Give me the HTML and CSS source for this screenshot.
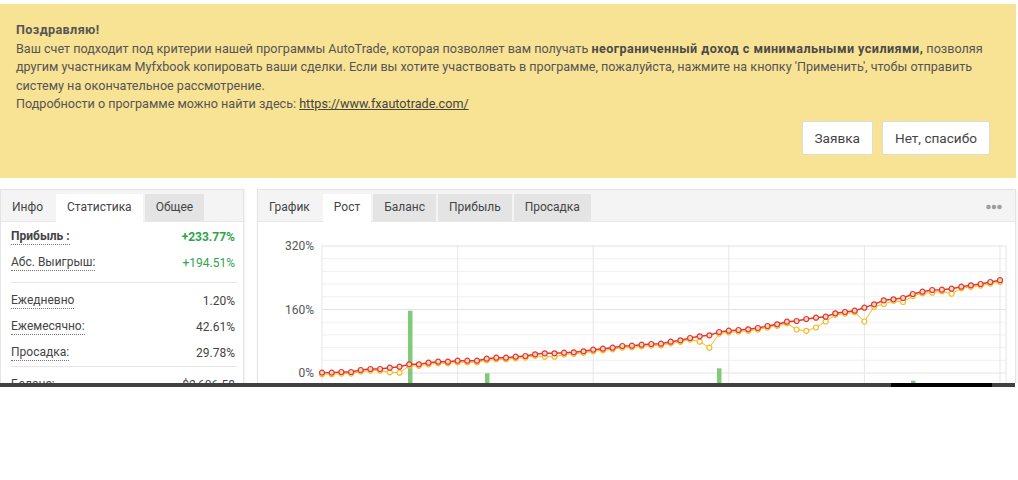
FILE: index.html
```html
<!DOCTYPE html>
<html lang="ru">
<head>
  <meta charset="UTF-8" />
  <meta name="viewport" content="width=device-width, initial-scale=1.0"/>
  <title>Статистика | Myfxbook</title>
  <link rel="stylesheet" href="styles.css">
</head>
<body>

  <div class="page">

    <!-- AutoTrade notice -->
    <div class="notice">
      <p class="notice-title">Поздравляю!</p>
      <p>Ваш счет подходит под критерии нашей программы AutoTrade, которая позволяет вам получать <b>неограниченный доход с минимальными усилиями,</b> позволяя другим участникам Myfxbook копировать ваши сделки. Если вы хотите участвовать в программе, пожалуйста, нажмите на кнопку 'Применить', чтобы отправить систему на окончательное рассмотрение.</p>
      <p>Подробности о программе можно найти здесь: <a href="https://www.fxautotrade.com/">https://www.fxautotrade.com/</a></p>
      <div class="notice-actions">
        <button>Заявка</button>
        <button>Нет, спасибо</button>
      </div>
    </div>

    <div class="panels">

      <!-- Stats -->
      <div class="panel panel-stats">
        <div class="tabs">
          <span class="tab tab-plain">Инфо</span>
          <span class="tab active">Статистика</span>
          <span class="tab">Общее</span>
        </div>
        <div class="stats-group stats-main">
          <div class="stat"><span class="stat-label strong">Прибыль :</span><span class="stat-value up strong">+233.77%</span></div>
          <div class="stat"><span class="stat-label">Абс. Выигрыш:</span><span class="stat-value up">+194.51%</span></div>
        </div>
        <div class="stats-group">
          <div class="stat"><span class="stat-label">Ежедневно</span><span class="stat-value">1.20%</span></div>
          <div class="stat"><span class="stat-label">Ежемесячно:</span><span class="stat-value">42.61%</span></div>
          <div class="stat"><span class="stat-label">Просадка:</span><span class="stat-value">29.78%</span></div>
        </div>
        <div class="stats-group">
          <div class="stat"><span class="stat-label">Баланс:</span><span class="stat-value">$2,606.58</span></div>
          <div class="stat"><span class="stat-label">Средства:</span><span class="stat-value">(100.00%) $2,606.58</span></div>
        </div>
      </div>

      <!-- Chart -->
      <div class="panel panel-chart">
        <div class="tabs">
          <span class="tab tab-plain">График</span>
          <span class="tab active">Рост</span>
          <span class="tab">Баланс</span>
          <span class="tab">Прибыль</span>
          <span class="tab">Просадка</span>
          <svg class="more" width="16" height="6" viewBox="0 0 16 6">
            <circle cx="2.5" cy="3" r="2.3" fill="#9e9e9e"/>
            <circle cx="8" cy="3" r="2.3" fill="#9e9e9e"/>
            <circle cx="13.5" cy="3" r="2.3" fill="#9e9e9e"/>
          </svg>
        </div>
        <svg id="growthChart" class="chart" width="757" height="200" viewBox="0 0 757 200">
          <defs>
            <marker id="dotRed" markerUnits="userSpaceOnUse" markerWidth="8" markerHeight="8" refX="4" refY="4">
              <circle cx="4" cy="4" r="2.5" fill="#fcd9cf" stroke="#e0392a" stroke-width="1.2"/>
            </marker>
            <marker id="dotOrange" markerUnits="userSpaceOnUse" markerWidth="8" markerHeight="8" refX="4" refY="4">
              <circle cx="4" cy="4" r="2.5" fill="#fff" stroke="#f7b91e" stroke-width="1.2"/>
            </marker>
          </defs>
          <g id="grid"></g>
          <g class="axis">
            <text x="56" y="28">320%</text>
            <text x="56" y="92">160%</text>
            <text x="56" y="155">0%</text>
          </g>
          <g id="bars" fill="#7fcb7a"></g>
          <polyline id="equityLine" fill="none" stroke="#f7b91e" stroke-width="1"
            marker-start="url(#dotOrange)" marker-mid="url(#dotOrange)" marker-end="url(#dotOrange)"/>
          <polyline id="growthLine" fill="none" stroke="#e0392a" stroke-width="1.4"
            marker-start="url(#dotRed)" marker-mid="url(#dotRed)" marker-end="url(#dotRed)"/>
        </svg>
      </div>

    </div>
  </div>

  <div class="hscroll"><div class="hscroll-thumb"></div></div>

  <script>
    // growth, % per week
    const growth = [1, 1, 2.5, 2.5, 7.6, 10, 10, 13.4, 15.9, 21.9, 21.9, 25.9, 28.5, 28.5, 31, 31, 31,
      36, 38.6, 38.6, 41, 42.8, 47.1, 49.6, 49.6, 51.2, 52.2, 54.7, 58.7, 61.2, 63.8, 68, 68.8, 71.3,
      73.1, 73.8, 78.9, 82.4, 88.2, 92.5, 95, 103.3, 106.6, 108.4, 110.1, 113.4, 118.4, 122.7, 129.3,
      131, 136.1, 139.4, 141.9, 150.4, 153.7, 157, 164.5, 173.1, 183.2, 185.7, 189, 199.1, 204.9,
      209.2, 209.9, 212.4, 217.5, 221, 224.3, 229.3, 233.77];

    // equity dips, everything else sits just under growth
    const equityDips = { 7: 1.8, 8: 0.8, 23: 41, 24: 41, 39: 78.9, 40: 63.8, 49: 109.6, 50: 106.3,
      51: 114.6, 52: 129.8, 56: 129.8, 57: 167, 58: 173.9, 60: 178.9, 61: 194, 63: 202.4, 65: 199.8 };

    const left = 64, right = 742, zeroY = 151, pxPerPct = 63.5 / 160;
    const step = (right - left) / (growth.length - 1);
    const x = i => (left + i * step).toFixed(1);
    const y = v => (zeroY - v * pxPerPct).toFixed(1);

    document.getElementById("growthLine").setAttribute("points",
      growth.map((v, i) => `${x(i)},${y(v)}`).join(" "));
    document.getElementById("equityLine").setAttribute("points",
      growth.map((v, i) => `${x(i)},${y(i in equityDips ? equityDips[i] : v - 4)}`).join(" "));

    // grid
    let grid = "";
    for (let k = -2; k <= 10; k++) {
      const gy = (zeroY - k * 12.7).toFixed(1);
      const major = k % 5 === 0;
      grid += `<line x1="${left}" x2="748" y1="${gy}" y2="${gy}" stroke="${major ? '#e3e3e3' : '#f1f1f1'}"/>`;
    }
    for (let k = 0; k <= 5; k++) {
      const gx = (left + k * 135.6).toFixed(1);
      grid += `<line x1="${gx}" x2="${gx}" y1="23" y2="200" stroke="#e6e6e6"/>`;
    }
    grid += `<line x1="748" x2="748" y1="23" y2="200" stroke="#e6e6e6"/>`;
    document.getElementById("grid").innerHTML = grid;

    // trades volume bars
    const bars = [[150, 88.7], [227, 151.3], [459, 146.3], [653, 158.7]];
    document.getElementById("bars").innerHTML = bars
      .map(([bx, by]) => `<rect x="${bx}" y="${by}" width="4.5" height="${200 - by}"/>`).join("");
  </script>

</body>
</html>
```

FILE: styles.css
```css
* {
  box-sizing: border-box;
}

body {
  font-family: Roboto, 'Liberation Sans', sans-serif;
  background: #fff;
  color: #444;
  margin: 0;
  padding: 0;
}

.page {
  height: 383px;
  overflow: hidden;
  padding: 4px 2px 0 0;
}

/* notice */

.notice {
  background: #f8e293;
  color: #555;
  font-size: 12.6px;
  line-height: 18.6px;
  padding: 17px 26px 23px 16px;
}

.notice p {
  margin: 0;
}

.notice-title {
  font-weight: bold;
  letter-spacing: 0.4px;
}

.notice b {
  color: #4a4a4a;
  letter-spacing: 0.45px;
}

.notice a {
  color: #444;
}

.notice-actions {
  display: flex;
  justify-content: flex-end;
  gap: 9px;
  margin-top: 7px;
}

.notice-actions button {
  height: 34px;
  padding: 0 12px;
  background: #fff;
  border: 1px solid #dcdcdc;
  border-radius: 2px;
  font-family: Roboto, 'Liberation Sans', sans-serif;
  font-size: 13.6px;
  color: #444;
  cursor: pointer;
}

/* panels */

.panels {
  display: flex;
  align-items: flex-start;
  gap: 13px;
  margin-top: 11px;
}

.panel {
  background: #fff;
  border: 1px solid #e4e4e4;
  box-shadow: 1px 1px 3px rgba(0, 0, 0, 0.06);
}

.panel-stats {
  width: 244px;
  flex: none;
}

.panel-chart {
  flex: 1;
}

.tabs {
  display: flex;
  align-items: flex-end;
  height: 32px;
  padding-top: 4px;
  background: #f4f4f4;
  border-bottom: 1px solid #e8e8e8;
}

.tab {
  height: 27px;
  line-height: 27px;
  padding: 0 11px;
  margin-right: 2px;
  font-size: 12px;
  color: #444;
  background: #e4e4e4;
  cursor: pointer;
}

.tab.tab-plain {
  background: transparent;
}

.tab.active {
  background: #fff;
  height: 28px;
  margin-bottom: -1px;
}

.more {
  margin: 0 13px 11px auto;
  align-self: flex-end;
}

/* stats */

.stats-group {
  margin: 0 6px 0 10px;
  padding: 5px 0 0;
  border-bottom: 1px solid #e6e6e6;
}

.stats-group.stats-main {
  padding: 2px 0 6px;
}

.stat {
  display: flex;
  justify-content: space-between;
  align-items: center;
  height: 26px;
  font-size: 12px;
  padding-right: 2px;
}

.stat-label {
  color: #444;
  border-bottom: 1px dotted #777;
  line-height: 16px;
}

.stat-value {
  color: #444;
}

.strong {
  font-weight: bold;
}

.up {
  color: #2ea34c;
}

/* chart */

.chart {
  display: block;
}

.axis text {
  font-size: 12px;
  fill: #555;
  text-anchor: end;
  font-family: Roboto, 'Liberation Sans', sans-serif;
}

/* bottom scroll bar */

.hscroll {
  display: flex;
  width: 1015px;
  height: 4px;
  background: #414141;
}

.hscroll-thumb {
  margin-left: 891px;
  width: 101px;
  background: #000;
}
```
